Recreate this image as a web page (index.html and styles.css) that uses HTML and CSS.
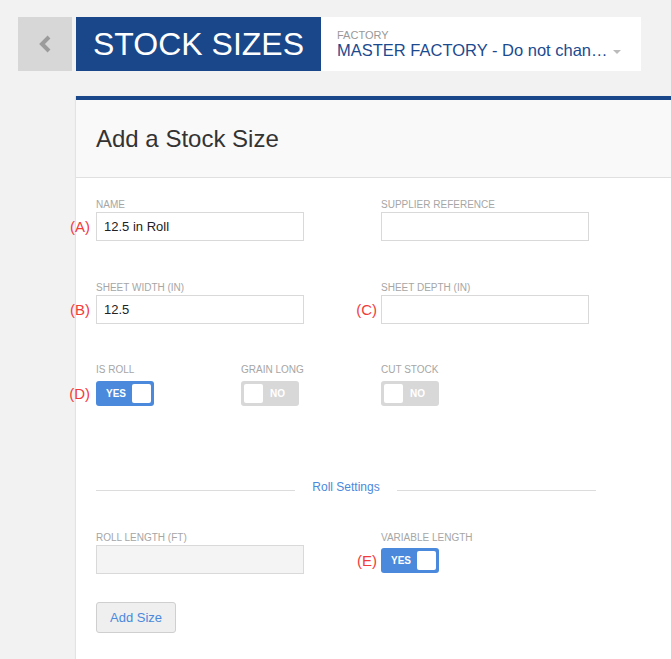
FILE: index.html
```html
<!DOCTYPE html>
<html lang="en">
<head>
<meta charset="utf-8">
<title>Stock Sizes</title>
<link rel="stylesheet" href="styles.css">
</head>
<body>
<div class="topbar">
  <a class="back" href="#" aria-label="Back">
    <svg width="54" height="54" viewBox="0 0 54 54"><polyline points="31,20 24,27 31,34" fill="none" stroke="#9b9b9b" stroke-width="4"/></svg>
  </a>
  <div class="heading-group">
    <div class="title">STOCK SIZES</div>
    <div class="factory">
      <div class="factory-label">FACTORY</div>
      <div class="factory-value">MASTER FACTORY - Do not chan…<span class="caret"></span></div>
    </div>
  </div>
</div>

<div class="card">
  <div class="card-header"><h1>Add a Stock Size</h1></div>
  <div class="card-body">
    <div class="row">
      <div class="field wide">
        <div class="label">NAME</div>
        <div class="control"><span class="mark">(A)</span><input class="input" type="text" value="12.5 in Roll"></div>
      </div>
      <div class="field col3">
        <div class="label">SUPPLIER REFERENCE</div>
        <div class="control"><input class="input" type="text" value=""></div>
      </div>
    </div>

    <div class="row gap-row">
      <div class="field wide">
        <div class="label">SHEET WIDTH (IN)</div>
        <div class="control"><span class="mark">(B)</span><input class="input" type="text" value="12.5"></div>
      </div>
      <div class="field col3">
        <div class="label">SHEET DEPTH (IN)</div>
        <div class="control"><span class="mark near">(C)</span><input class="input" type="text" value=""></div>
      </div>
    </div>

    <div class="row toggle-row">
      <div class="field">
        <div class="label tlabel">IS ROLL</div>
        <div class="control"><span class="mark">(D)</span><div class="toggle on"><span class="ttext">YES</span><span class="knob"></span></div></div>
      </div>
      <div class="field">
        <div class="label tlabel">GRAIN LONG</div>
        <div class="control"><div class="toggle off"><span class="knob"></span><span class="ttext">NO</span></div></div>
      </div>
      <div class="field col3">
        <div class="label tlabel">CUT STOCK</div>
        <div class="control"><div class="toggle off"><span class="knob"></span><span class="ttext">NO</span></div></div>
      </div>
    </div>

    <div class="divider"><span class="line"></span><span class="divider-text">Roll Settings</span><span class="line"></span></div>

    <div class="row roll-row">
      <div class="field wide">
        <div class="label">ROLL LENGTH (FT)</div>
        <div class="control"><input class="input disabled" type="text" value="" disabled></div>
      </div>
      <div class="field col3">
        <div class="label tlabel2">VARIABLE LENGTH</div>
        <div class="control"><span class="mark near">(E)</span><div class="toggle on"><span class="ttext">YES</span><span class="knob"></span></div></div>
      </div>
    </div>

    <button class="btn" type="button">Add Size</button>
  </div>
</div>
</body>
</html>
```

FILE: styles.css
```css
html, body {
  margin: 0;
  padding: 0;
  height: 100%;
  overflow: hidden;
}
body {
  background: #f2f2f2;
  font-family: "Liberation Sans", Arial, sans-serif;
  color: #333;
}

.topbar {
  display: flex;
  gap: 4px;
  margin: 17px 0 0 18px;
  height: 54px;
}
.back {
  display: block;
  width: 54px;
  height: 54px;
  background: #d7d7d7;
}
.back svg { display: block; }
.heading-group {
  display: flex;
}
.title {
  width: 228px;
  padding-left: 17px;
  background: #19478a;
  color: #fff;
  font-size: 32px;
  line-height: 54px;
  white-space: nowrap;
}
.factory {
  width: 304px;
  padding: 12px 0 0 16px;
  background: #fff;
}
.factory-label {
  font-size: 11px;
  line-height: 12px;
  color: #999;
}
.factory-value {
  font-size: 16.5px;
  line-height: 18px;
  color: #1c4a8f;
  white-space: nowrap;
}
.caret {
  display: inline-block;
  vertical-align: middle;
  margin-left: 5px;
  width: 0;
  height: 0;
  border-top: 4px solid #bbb;
  border-left: 4.5px solid transparent;
  border-right: 4.5px solid transparent;
}

.card {
  margin: 25px 0 0 76px;
  border-top: 4px solid #19478a;
  background: #fff;
  box-shadow: -1px 0 1px rgba(0, 0, 0, 0.06);
  height: calc(100vh - 100px);
}
.card-header {
  background: #f9f9f9;
  border-bottom: 1px solid #e0e0e0;
  padding: 25px 20px 24px;
}
.card-header h1 {
  margin: 0;
  font-size: 24px;
  line-height: 28px;
  font-weight: normal;
  color: #333;
}
.card-body {
  padding: 21px 20px 0;
}

.row {
  display: grid;
  grid-template-columns: 145px 140px 208px;
}
.gap-row { margin-top: 41px; }
.toggle-row { margin-top: 40px; }
.roll-row { margin-top: 38px; }
.wide { grid-column: 1 / 3; }
.col3 { grid-column: 3; }

.label {
  font-size: 10px;
  line-height: 12px;
  color: #a6a6a6;
  margin-bottom: 1px;
  white-space: nowrap;
}
.tlabel { margin-bottom: 5px; }
.tlabel2 { margin-bottom: 4px; }

.control {
  position: relative;
}
.mark {
  position: absolute;
  right: calc(100% + 6px);
  top: 50%;
  transform: translateY(-50%);
  font-size: 15px;
  line-height: 18px;
  color: #f23c3c;
  white-space: nowrap;
}
.mark.near { right: calc(100% + 4px); }

.input {
  display: block;
  box-sizing: border-box;
  width: 208px;
  height: 29px;
  margin: 0;
  padding: 0 7px;
  border: 1px solid #d9d9d9;
  border-radius: 0;
  background: #fff;
  font-family: "Liberation Sans", Arial, sans-serif;
  font-size: 13px;
  color: #222;
  outline: none;
}
.input.disabled {
  background: #f4f4f4;
}

.toggle {
  box-sizing: border-box;
  width: 58px;
  height: 25px;
  border-radius: 3px;
  display: flex;
  align-items: center;
  justify-content: space-between;
}
.toggle.on {
  background: #4a89dc;
  padding: 0 3px 0 10px;
}
.toggle.off {
  background: #d8d8d8;
  padding: 0 14px 0 3px;
}
.knob {
  width: 19px;
  height: 19px;
  border-radius: 2px;
  background: #fff;
}
.ttext {
  font-size: 10px;
  font-weight: bold;
  color: #fff;
  line-height: 12px;
}

.divider {
  display: flex;
  align-items: center;
  gap: 17px;
  width: 500px;
  margin-top: 74px;
}
.line {
  flex: 1;
  height: 1px;
  background: #dcdcdc;
  margin-top: 6px;
}
.divider-text {
  font-size: 12px;
  line-height: 14px;
  color: #4a89dc;
  white-space: nowrap;
}

.btn {
  display: block;
  margin-top: 28px;
  box-sizing: border-box;
  height: 31px;
  padding: 0 13px;
  border: 1px solid #cfcfcf;
  border-radius: 3px;
  background: #efefef;
  font-family: "Liberation Sans", Arial, sans-serif;
  font-size: 13px;
  color: #4a89dc;
}
```
